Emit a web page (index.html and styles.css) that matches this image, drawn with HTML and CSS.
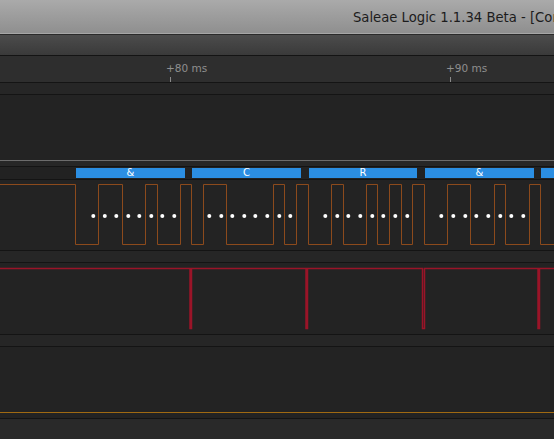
FILE: index.html
```html
<!DOCTYPE html>
<html>
<head>
<meta charset="utf-8">
<link rel="stylesheet" href="styles.css">
</head>
<body>
<div class="window">
  <div class="titlebar"><span class="title">Saleae Logic 1.1.34 Beta - [Connected] - [25 MHz Digital, 100 ms]</span></div>
  <div class="toolbar"></div>
  <div class="ruler">
    <div class="tick" style="left:170px"><span class="tick-label">+80 ms</span></div>
    <div class="tick" style="left:450px"><span class="tick-label">+90 ms</span></div>
  </div>
  <div class="strip"></div>
  <div class="channel ch0"></div>
  <div class="sepline"></div>
  <div class="gap gap-small"></div>
  <div class="analyzer">
    <div class="frame" style="left:76px;width:109px">&amp;</div>
    <div class="frame" style="left:192px;width:109px">C</div>
    <div class="frame" style="left:309px;width:108px">R</div>
    <div class="frame" style="left:425px;width:109px">&amp;</div>
    <div class="frame" style="left:541px;width:40px"></div>
  </div>
  <div class="channel ch1">
    <svg class="wave" width="554" height="70" viewBox="0 0 554 70">
      <path class="sig-orange" d="M0 4.5 H75.5 V64.5 H98.5 V4.5 H122.5 V64.5 H145.5 V4.5 H157.5 V64.5 H180.5 V4.5 H191.5 V64.5 H203.5 V4.5 H226.5 V64.5 H273.5 V4.5 H284.5 V64.5 H296.5 V4.5 H308.5 V64.5 H331.5 V4.5 H343.5 V64.5 H366.5 V4.5 H377.5 V64.5 H389.5 V4.5 H401.5 V64.5 H412.5 V4.5 H424.5 V64.5 H447.5 V4.5 H470.5 V64.5 H494.5 V4.5 H505.5 V64.5 H529.5 V4.5 H540.5 V64.5 H556"/>
      <g class="dots">
        <circle cx="93.3" cy="36" r="2"/><circle cx="104.8" cy="36" r="2"/><circle cx="116.3" cy="36" r="2"/><circle cx="128.3" cy="36" r="2"/><circle cx="139.3" cy="36" r="2"/><circle cx="151.3" cy="36" r="2"/><circle cx="162.3" cy="36" r="2"/><circle cx="174.3" cy="36" r="2"/>
        <circle cx="209.3" cy="36" r="2"/><circle cx="221.3" cy="36" r="2"/><circle cx="232.3" cy="36" r="2"/><circle cx="244.3" cy="36" r="2"/><circle cx="255.3" cy="36" r="2"/><circle cx="267.3" cy="36" r="2"/><circle cx="279.3" cy="36" r="2"/><circle cx="290.3" cy="36" r="2"/>
        <circle cx="325.3" cy="36" r="2"/><circle cx="337.3" cy="36" r="2"/><circle cx="348.3" cy="36" r="2"/><circle cx="360.3" cy="36" r="2"/><circle cx="372.3" cy="36" r="2"/><circle cx="383.3" cy="36" r="2"/><circle cx="395.3" cy="36" r="2"/><circle cx="407.3" cy="36" r="2"/>
        <circle cx="441.3" cy="36" r="2"/><circle cx="453.3" cy="36" r="2"/><circle cx="465.3" cy="36" r="2"/><circle cx="476.3" cy="36" r="2"/><circle cx="488.3" cy="36" r="2"/><circle cx="500.3" cy="36" r="2"/><circle cx="511.3" cy="36" r="2"/><circle cx="523.3" cy="36" r="2"/>
      </g>
    </svg>
  </div>
  <div class="gap"></div>
  <div class="channel ch2">
    <svg class="wave" width="554" height="71" viewBox="0 0 554 71">
      <path class="sig-red" d="M-2 5.5 H190 V65.5 H191.5 V5.5 H306 V65.5 H307.5 V5.5 H422.5 V65.5 H424.5 V5.5 H538 V65.5 H539.5 V5.5 H556"/>
    </svg>
  </div>
  <div class="gap"></div>
  <div class="channel ch3">
    <svg class="wave" width="554" height="71" viewBox="0 0 554 71">
      <path class="sig-gold" d="M-2 65.5 H556"/>
    </svg>
  </div>
  <div class="footer"></div>
</div>
</body>
</html>
```

FILE: styles.css
```css
html, body {
  margin: 0;
  padding: 0;
  background: #232323;
  overflow: hidden;
}
.window {
  width: 554px;
  height: 439px;
  display: flex;
  flex-direction: column;
  overflow: hidden;
  font-family: "DejaVu Sans", "Liberation Sans", sans-serif;
}
.titlebar {
  height: 33px;
  flex: none;
  background: linear-gradient(#aaaaaa, #8f8f8f);
  border-bottom: 1px solid #a6a6a6;
  box-shadow: 0 1px 0 #2a2a2a;
  display: flex;
  align-items: center;
  padding-left: 353px;
  overflow: hidden;
  white-space: nowrap;
  margin-bottom: 1px;
}
.title {
  font-size: 13.2px;
  color: #1c1c1c;
  padding-top: 1px;
}
.toolbar {
  height: 20px;
  flex: none;
  background: linear-gradient(#4c4c4c, #3a3a3a);
  border-bottom: 1px solid #141414;
}
.ruler {
  height: 26px;
  flex: none;
  background: #2e2e2e;
  border-bottom: 1px solid #141414;
  position: relative;
}
.tick {
  position: absolute;
  bottom: 0;
  width: 1px;
  height: 5px;
  background: #8a8a8a;
}
.tick-label {
  position: absolute;
  bottom: 8px;
  left: -4px;
  font-size: 10.5px;
  color: #8f8f8f;
  white-space: nowrap;
}
.strip {
  height: 11px;
  flex: none;
  background: #262626;
  border-bottom: 1px solid #141414;
}
.channel {
  flex: none;
  background: #232323;
  position: relative;
}
.ch0 { height: 65px; }
.sepline {
  height: 1px;
  flex: none;
  background: #6c6c6c;
}
.gap {
  height: 11px;
  flex: none;
  background: #262626;
  border-bottom: 1px solid #141414;
}
.gap-small {
  height: 5px;
  background: #272727;
}
.analyzer {
  height: 12px;
  flex: none;
  background: #222222;
  border-bottom: 1px solid #141414;
  position: relative;
}
.frame {
  position: absolute;
  top: 1px;
  height: 10px;
  background: #2b8ee2;
  color: #ffffff;
  font-size: 10px;
  line-height: 10px;
  text-align: center;
}
.ch1 { height: 70px; border-bottom: 1px solid #141414; }
.ch2 { height: 71px; border-bottom: 1px solid #141414; }
.ch3 { height: 71px; border-bottom: 1px solid #141414; }
.wave { display: block; }
.sig-orange { fill: none; stroke: #8c4a1c; stroke-width: 1; }
.sig-red { fill: none; stroke: #9a1428; stroke-width: 1.5; }
.sig-gold { fill: none; stroke: #a06a12; stroke-width: 1; }
.dots circle { fill: #ffffff; }
.footer {
  flex: 1;
  background: #292929;
}
```
